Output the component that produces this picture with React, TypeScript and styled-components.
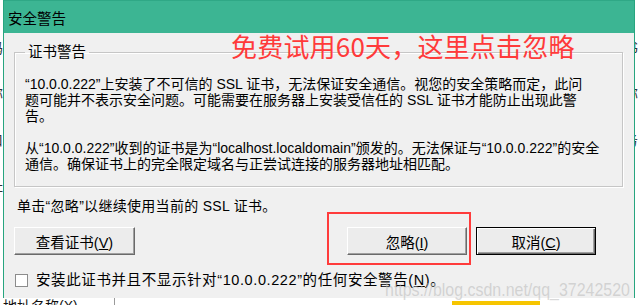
import React from "react";
import styled, { createGlobalStyle } from "styled-components";

const GlobalStyle = createGlobalStyle`
  html, body {
    margin: 0;
    padding: 0;
    background: #ffffff;
  }
`;

const FONT = `"Liberation Sans", "Noto Sans CJK SC", sans-serif`;

const Page = styled.div`
  position: relative;
  width: 638px;
  height: 305px;
  overflow: hidden;
  background: #ffffff;
  display: flex;
  flex-direction: column;
  font-family: ${FONT};
  color: #000000;
`;

const MainRow = styled.div`
  height: 298px;
  display: flex;
`;

const Edge = styled.div<{ $width: number }>`
  width: ${(p) => p.$width}px;
  flex-shrink: 0;
  overflow: hidden;
  direction: rtl;
  display: flex;
  flex-direction: column;
  gap: 30px;
  padding-top: 40px;
  font-size: 14px;
  line-height: 16px;
  white-space: nowrap;
  color: #333;
`;

const Dialog = styled.div`
  flex: 1;
  min-width: 0;
  display: flex;
  flex-direction: column;
  border-left: 1px solid #27a57f;
  border-right: 1px solid #27a57f;
`;

const TitleBar = styled.div`
  height: 33px;
  flex-shrink: 0;
  display: flex;
  align-items: center;
  padding-left: 4px;
  background: #3cb593;
  border-top: 1px solid #2fa886;
  box-sizing: border-box;
  font-size: 14.5px;
`;

const Body = styled.div`
  flex: 1;
  min-width: 0;
  overflow: hidden;
  background: #f0f0f0;
  padding: 11px 11px 0 10px;
  display: flex;
  flex-direction: column;
  font-size: 14px;
  line-height: 16px;
`;

const GroupBox = styled.fieldset`
  margin: 0;
  padding: 0 10px 14px;
  min-width: 0;
  overflow: hidden;
  border: 1px solid #c6c6c6;
  box-shadow: inset 1px 1px 0 #ffffff, 1px 1px 0 #ffffff;
`;

const Legend = styled.legend`
  padding: 0 3px;
  margin-left: 0;
  line-height: 16px;
  font-size: 14.5px;
`;

const Message = styled.p`
  margin: 16px 0 0;
  white-space: nowrap;
`;

const Note = styled.div`
  margin-top: 11px;
  padding-left: 3px;
  white-space: nowrap;
  letter-spacing: 0.3px;
`;

const ButtonRow = styled.div`
  margin-top: 13px;
  padding-right: 27px;
  display: flex;
  align-items: center;
  gap: 9px;
`;

const WinButton = styled.button<{ $primary?: boolean; $push?: boolean }>`
  width: ${(p) => (p.$push || p.$primary ? 120 : 121)}px;
  height: 28px;
  flex-shrink: 0;
  margin-left: ${(p) => (p.$push ? "auto" : "0")};
  padding: 0;
  box-sizing: border-box;
  background: #ececec;
  font-family: ${FONT};
  font-size: 14.5px;
  color: #000;
  border: 1px solid;
  border-color: ${(p) =>
    p.$primary ? "#000 #000 #000 #000" : "#ffffff #6a6a6a #6a6a6a #ffffff"};
  box-shadow: ${(p) =>
    p.$primary
      ? "inset 1px 1px 0 #ffffff, inset -1px -1px 0 #6a6a6a, inset -2px -2px 0 #a0a0a0"
      : "inset -1px -1px 0 #a0a0a0"};
`;

const CheckRow = styled.label`
  margin-top: 17px;
  padding-left: 1px;
  display: flex;
  align-items: center;
  gap: 8px;
  white-space: nowrap;
  font-size: 14.5px;
  letter-spacing: 0.6px;
`;

const CheckBox = styled.span`
  width: 13px;
  height: 13px;
  box-sizing: border-box;
  background: #ffffff;
  border: 1px solid #8c8c8c;
  flex-shrink: 0;
`;

const BottomStrip = styled.div`
  height: 7px;
  overflow: hidden;
  display: flex;
  align-items: flex-start;
  background: #ffffff;
  font-size: 14px;
  line-height: 16px;
`;

const BackText = styled.span`
  margin-left: 3px;
  white-space: nowrap;
  color: #111;
`;

const BackDivider = styled.span`
  width: 1px;
  height: 7px;
  margin-left: 36px;
  background: #9a9a9a;
`;

const YellowBar = styled.span`
  width: 88px;
  height: 4px;
  margin-top: 3px;
  margin-left: auto;
  margin-right: 98px;
  background: #f6c500;
`;

/* overlays drawn on top of the screenshot */
const Annotation = styled.div`
  position: absolute;
  left: 231px;
  top: 30px;
  font-family: "Noto Sans CJK SC", sans-serif;
  font-size: 26px;
  line-height: 32px;
  color: #ff3a3a;
  white-space: nowrap;
  letter-spacing: 0.2px;
`;

const Highlight = styled.div`
  position: absolute;
  left: 327px;
  top: 212px;
  width: 144px;
  height: 53px;
  box-sizing: border-box;
  border: 2px solid #ff3b3b;
  pointer-events: none;
`;

const Watermark = styled.div`
  position: absolute;
  left: 385px;
  top: 278px;
  font-family: "Liberation Sans", Arial, sans-serif;
  font-size: 19px;
  line-height: 24px;
  color: rgba(185, 185, 185, 0.55);
  white-space: nowrap;
  transform: scaleX(0.84);
  transform-origin: left top;
  pointer-events: none;
`;

export default function App() {
  return (
    <>
      <GlobalStyle />
      <Page>
        <MainRow>
          <Edge $width={3}>
            <span>密码</span>
            <span>名称</span>
            <span>端口</span>
            <span>地址</span>
          </Edge>
          <Dialog>
            <TitleBar>安全警告</TitleBar>
            <Body>
              <GroupBox>
                <Legend>证书警告</Legend>
                <Message>
                  “10.0.0.222”上安装了不可信的 SSL 证书，无法保证安全通信。视您的安全策略而定，此问
                  <br />
                  题可能并不表示安全问题。可能需要在服务器上安装受信任的 SSL 证书才能防止出现此警
                  <br />
                  告。
                </Message>
                <Message>
                  从“10.0.0.222”收到的证书是为“localhost.localdomain”颁发的。无法保证与“10.0.0.222”的安全
                  <br />
                  通信。确保证书上的完全限定域名与正尝试连接的服务器地址相匹配。
                </Message>
              </GroupBox>
              <Note>单击“忽略”以继续使用当前的 SSL 证书。</Note>
              <ButtonRow>
                <WinButton>
                  查看证书(<u>V</u>)
                </WinButton>
                <WinButton $push>
                  忽略(<u>I</u>)
                </WinButton>
                <WinButton $primary>
                  取消(<u>C</u>)
                </WinButton>
              </ButtonRow>
              <CheckRow>
                <CheckBox />
                <span>
                  安装此证书并且不显示针对“10.0.0.222”的任何安全警告(<u>N</u>)。
                </span>
              </CheckRow>
            </Body>
          </Dialog>
          <Edge $width={3}>
            <span>证书</span>
            <span>名称</span>
            <span>服务</span>
          </Edge>
        </MainRow>
        <BottomStrip>
          <BackText>地址名称(X)</BackText>
          <BackDivider />
          <YellowBar />
        </BottomStrip>
        <Annotation>免费试用60天，这里点击忽略</Annotation>
        <Highlight />
        <Watermark>https://blog.csdn.net/qq_37242520</Watermark>
      </Page>
    </>
  );
}
